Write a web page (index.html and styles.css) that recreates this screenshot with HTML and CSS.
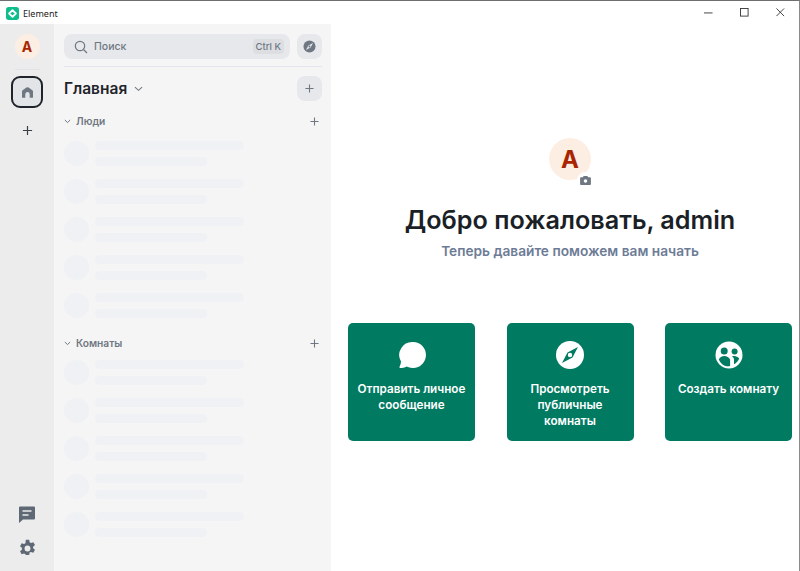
FILE: index.html
```html
<!DOCTYPE html>
<html lang="ru">
<head>
<meta charset="utf-8">
<title>Element</title>
<link rel="stylesheet" href="styles.css">
</head>
<body>
<div class="window">
  <header class="titlebar">
    <div class="app-title">
      <svg class="app-logo" viewBox="0 0 14 14"><rect width="14" height="14" rx="3" fill="#0dbd8b"/><path d="M7 3.400 L10.600 7 L7 10.600 L3.400 7 Z" fill="none" stroke="#fff" stroke-width="2" stroke-linejoin="round"/></svg>
      <span>Element</span>
    </div>
    <div class="win-controls">
      <svg viewBox="0 0 10 10"><path d="M0 5.500H9.500" stroke="#333" stroke-width="1"/></svg>
      <svg viewBox="0 0 10 10"><rect x=".5" y=".5" width="8.500" height="8.500" fill="none" stroke="#333" stroke-width="1"/></svg>
      <svg viewBox="0 0 10 10"><path d="M.5.5L9 9M9 .5L.5 9" stroke="#333" stroke-width="1"/></svg>
    </div>
  </header>
  <div class="app">
    <nav class="rail">
      <div class="avatar-small">A</div>
      <div class="rail-sep"></div>
      <div class="home-btn">
        <svg viewBox="0 0 10 10" width="11" height="11"><path fill="#6f7882" d="M0 9.800V4.200Q0 3.500.6 3L4 .5Q5 -.1 6 .5L9.400 3Q10 3.500 10 4.200V9.800H7V6.500A2 2 0 0 0 3 6.500V9.800z"/></svg>
      </div>
      <svg class="rail-plus" viewBox="0 0 12 12"><path d="M6 1v10M1 6h10" stroke="#3a4048" stroke-width="1.300"/></svg>
      <div class="rail-spacer"></div>
      <svg class="rail-icon" viewBox="0 0 18 18"><path fill="#5f6975" d="M1 2.500A1 1 0 0 1 2 1.500h14a1 1 0 0 1 1 1v11a1 1 0 0 1-1 1H5l-4 3.500z"/><path d="M4.500 6h9M4.500 10h6" stroke="#ececec" stroke-width="1.600"/></svg>
      <svg class="rail-icon gear" viewBox="0 0 18 18"><path fill="#5f6975" fill-rule="evenodd" d="M7.400.8h3.200l.4 2.300 1.300.7 2.200-.8 1.600 2.800-1.800 1.500v1.400l1.800 1.500-1.600 2.800-2.200-.8-1.300.7-.4 2.300H7.400L7 14.400l-1.300-.7-2.200.8-1.600-2.800 1.800-1.500V8.300L1.900 6.800l1.600-2.800 2.200.8L7 4.100zM9 6.200a2.800 2.800 0 1 0 0 5.600 2.800 2.800 0 0 0 0-5.600z"/></svg>
    </nav>
    <aside class="panel">
      <div class="search-row">
        <div class="search">
          <svg class="search-icon" viewBox="0 0 14 14"><circle cx="6" cy="6" r="4.700" fill="none" stroke="#6f7882" stroke-width="1.200"/><path d="M9.500 9.500L13 13" stroke="#6f7882" stroke-width="1.200"/></svg>
          <span class="search-text">Поиск</span>
          <span class="kbd">Ctrl K</span>
        </div>
        <div class="square-btn">
          <svg viewBox="0 0 14 14" width="13" height="13"><circle cx="7" cy="7" r="6.500" fill="#6f7882"/><path fill="#e7e8eb" d="M10.800 3.200L8.200 8.200 3.200 10.800 5.800 5.800z"/><circle cx="7" cy="7" r="1" fill="#6f7882"/></svg>
        </div>
      </div>
      <div class="panel-sep"></div>
      <div class="home-head">
        <h2>Главная</h2>
        <svg class="chev-big" viewBox="0 0 10 6"><path d="M1 1l4 3.500L9 1" fill="none" stroke="#6f7882" stroke-width="1.200"/></svg>
        <div class="square-btn push">
          <svg viewBox="0 0 10 10" width="9" height="9"><path d="M5 .5v9M.5 5h9" stroke="#6f7882" stroke-width="1.200"/></svg>
        </div>
      </div>
      <section class="group">
        <div class="group-head">
          <svg class="chev" viewBox="0 0 8 6"><path d="M.8 1.200L4 4.300 7.200 1.200" fill="none" stroke="#6f7882" stroke-width="1.200"/></svg>
          <span>Люди</span>
          <svg class="group-plus" viewBox="0 0 10 10"><path d="M5 .5v9M.5 5h9" stroke="#6f7882" stroke-width="1.200"/></svg>
        </div>
        <div class="skeleton"><i></i><div><b></b><b></b></div></div>
        <div class="skeleton"><i></i><div><b></b><b></b></div></div>
        <div class="skeleton"><i></i><div><b></b><b></b></div></div>
        <div class="skeleton"><i></i><div><b></b><b></b></div></div>
        <div class="skeleton"><i></i><div><b></b><b></b></div></div>
      </section>
      <section class="group rooms">
        <div class="group-head">
          <svg class="chev" viewBox="0 0 8 6"><path d="M.8 1.200L4 4.300 7.200 1.200" fill="none" stroke="#6f7882" stroke-width="1.200"/></svg>
          <span>Комнаты</span>
          <svg class="group-plus" viewBox="0 0 10 10"><path d="M5 .5v9M.5 5h9" stroke="#6f7882" stroke-width="1.200"/></svg>
        </div>
        <div class="skeleton"><i></i><div><b></b><b></b></div></div>
        <div class="skeleton"><i></i><div><b></b><b></b></div></div>
        <div class="skeleton"><i></i><div><b></b><b></b></div></div>
        <div class="skeleton"><i></i><div><b></b><b></b></div></div>
        <div class="skeleton"><i></i><div><b></b><b></b></div></div>
      </section>
    </aside>
    <main class="main">
      <div class="avatar-large">
        A
        <span class="camera">
          <svg viewBox="0 0 12 10" width="11" height="9"><path fill="#6f7882" fill-rule="evenodd" d="M4 0h4l1 1.500h2a1 1 0 0 1 1 1V9a1 1 0 0 1-1 1H1a1 1 0 0 1-1-1V2.500a1 1 0 0 1 1-1h2zM6 3.500a2 2 0 1 0 0 4 2 2 0 0 0 0-4z"/></svg>
        </span>
      </div>
      <h1>Добро пожаловать, admin</h1>
      <p class="sub">Теперь давайте поможем вам начать</p>
      <div class="cards">
        <div class="card">
          <svg viewBox="0 0 28 28" width="28" height="28"><path fill="#fff" d="M15 1a13 13 0 1 1-6.300 24.400C6.800 26.300 3.700 27 2.300 27c-.8 0-1.100-.7-.8-1.300.6-1.100 1.400-3.300 1.500-5.200A13 13 0 0 1 15 1z"/></svg>
          <span>Отправить личное сообщение</span>
        </div>
        <div class="card">
          <svg viewBox="0 0 28 28" width="28" height="28"><circle cx="14" cy="14" r="14" fill="#fff"/><path fill="#007a61" d="M22 6L16.500 16.500 6 22 11.500 11.500z"/><circle cx="14" cy="14" r="2.200" fill="#fff"/></svg>
          <span>Просмотреть публичные комнаты</span>
        </div>
        <div class="card">
          <svg viewBox="0 0 28 28" width="28" height="28"><circle cx="14" cy="14" r="13.500" fill="#fff"/><circle cx="9.200" cy="10" r="3.500" fill="#007a61"/><circle cx="19.600" cy="10.500" r="3" fill="#007a61"/><path fill="#007a61" d="M3.800 18.500c1-2.300 3-3.500 5.500-3.500s4.700 1.300 5.800 3.500v6.500c-2 .5-3.700.3-5.300-.3-2.700-1.100-4.800-3.500-6-6.200zM17 15.300c.7-.2 1.400-.3 2.200-.3 2 0 3.800.9 5 2.600-.9 2.400-2.800 4.500-5.200 5.700v-4.500c0-1.500-.8-2.800-2-3.500z"/></svg>
          <span>Создать комнату</span>
        </div>
      </div>
    </main>
  </div>
</div>
</body>
</html>
```
FILE: styles.css
```css
* { box-sizing: border-box; }
html, body { margin: 0; height: 100%; }
body { font-family: Inter, "Noto Sans", sans-serif; background: #fff; overflow: hidden; }
.window { width: 800px; height: 571px; display: flex; flex-direction: column; border-top: 1px solid #6e6e6e; border-right: 1px solid #8a8a8a; }
.titlebar { height: 23px; flex: none; display: flex; align-items: center; justify-content: space-between; background: #fff; }
.app-title { display: flex; align-items: center; gap: 4px; padding-left: 6px; font-family: "Noto Sans", sans-serif; font-size: 9px; color: #222; margin-top: 1px; }
.app-logo { width: 13px; height: 13px; }
.win-controls { display: flex; gap: 27px; padding-right: 14px; align-items: center; }
.win-controls svg { width: 9px; height: 9px; display: block; }
.app { flex: 1; display: flex; min-height: 0; }
.rail { width: 54px; flex: none; background: #ececec; display: flex; flex-direction: column; align-items: center; padding: 10px 0 13px; }
.avatar-small { width: 25px; height: 25px; border-radius: 50%; background: #fdeee3; color: #a92500; font-weight: 700; font-size: 14px; display: flex; align-items: center; justify-content: center; }
.rail-sep { width: 25px; height: 1px; background: #e2e3e6; margin: 10px 0 6px; }
.home-btn { width: 32px; height: 32px; border: 2px solid #1f242b; border-radius: 9px; background: #e2e4e8; display: flex; align-items: center; justify-content: center; }
.rail-plus { width: 11px; height: 11px; margin-top: 17px; }
.rail-spacer { flex: 1; }
.rail-icon { width: 18px; height: 18px; }
.gear { width: 19px; height: 19px; margin-top: 16px; }
.panel { width: 277px; flex: none; background: #f5f5f5; padding: 10px 9px 0 10px; }
.search-row { display: flex; gap: 7px; }
.search { flex: 1; height: 25px; border-radius: 8px; background: #e7e8eb; display: flex; align-items: center; padding: 0 6px 0 10px; }
.search-icon { width: 14px; height: 14px; }
.search-text { margin-left: 6px; font-size: 10.500px; font-weight: 500; color: #6f7882; flex: 1; }
.kbd { background: #dcdee2; border-radius: 4px; padding: 1px 3px; font-size: 9.500px; font-weight: 500; color: #6f7882; line-height: 13px; }
.square-btn { width: 25px; height: 25px; flex: none; border-radius: 8px; background: #e7e8eb; display: flex; align-items: center; justify-content: center; }
.push { margin-left: auto; }
.panel-sep { height: 1px; background: #e3e6ec; margin-top: 7px; }
.home-head { display: flex; align-items: center; margin-top: 9px; height: 25px; }
.home-head h2 { margin: 0; font-size: 15.500px; font-weight: 600; color: #1f242b; }
.chev-big { width: 9px; height: 6px; margin-left: 7px; }
.group { margin-top: 13px; }
.rooms { margin-top: 5px; }
.group-head { display: flex; align-items: center; height: 14px; font-size: 10.200px; font-weight: 600; color: #6f7882; margin-bottom: 13px; }
.rooms .group-head { margin-bottom: 10px; }
.chev { width: 7px; height: 5px; margin-right: 5px; }
.group-plus { width: 9px; height: 9px; margin-left: auto; margin-right: 3px; }
.skeleton { display: flex; gap: 6px; height: 38px; }
.skeleton i { width: 25px; height: 25px; border-radius: 50%; background: #f0f1f4; }
.skeleton div { display: flex; flex-direction: column; gap: 7px; }
.skeleton b { display: block; height: 9px; border-radius: 5px; background: #f0f1f4; width: 149px; }
.skeleton b + b { width: 112px; }
.main { flex: 1; min-width: 0; background: #fff; display: flex; flex-direction: column; align-items: center; padding: 114px 7px 0 17px; }
.avatar-large { position: relative; width: 42px; height: 42px; border-radius: 50%; background: #fdeee3; color: #a92500; font-weight: 700; font-size: 24px; display: flex; align-items: center; justify-content: center; flex: none; }
.camera { position: absolute; right: -3px; bottom: -9px; width: 17px; height: 17px; border-radius: 50%; background: #fff; display: flex; align-items: center; justify-content: center; }
h1 { margin: 24px 0 0; font-size: 25.200px; line-height: 32px; font-weight: 600; color: #1b1f26; white-space: nowrap; }
.sub { margin: 6px 0 0; font-size: 13.700px; line-height: 18px; font-weight: 600; color: #6d7c96; }
.cards { align-self: stretch; display: flex; justify-content: space-between; margin-top: 63px; }
.card { width: 127px; height: 118px; border-radius: 5px; background: #007a61; color: #fff; display: flex; flex-direction: column; align-items: center; padding: 18px 8px 0; font-size: 11.700px; line-height: 16px; font-weight: 600; text-align: center; }
.card span { margin-top: 12px; }
```
